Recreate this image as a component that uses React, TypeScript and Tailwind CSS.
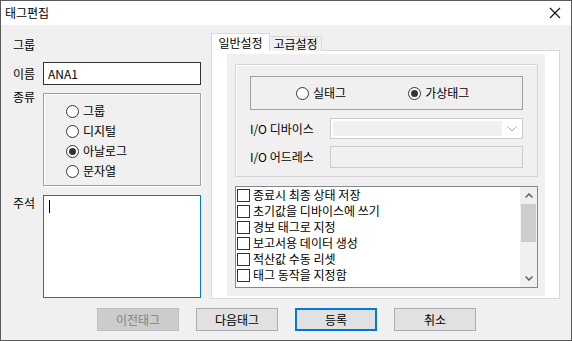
import React from 'react';

const font = { fontFamily: '"Noto Sans CJK KR", "Noto Sans", sans-serif' };

const Radio = ({ checked, label }: { checked?: boolean; label: string }) => (
  <div className="flex items-center gap-[4px] h-[20px]">
    <span className="w-[13px] h-[13px] rounded-full border border-[#333333] bg-white flex items-center justify-center">
      {checked && <span className="w-[7px] h-[7px] rounded-full bg-[#333333]" />}
    </span>
    <span>{label}</span>
  </div>
);

const options = [
  '종료시 최종 상태 저장',
  '초기값을 디바이스에 쓰기',
  '경보 태그로 지정',
  '보고서용 데이터 생성',
  '적산값 수동 리셋',
  '태그 동작을 지정함',
];

const Button = ({ label, disabled, primary }: { label: string; disabled?: boolean; primary?: boolean }) => (
  <div
    className={
      disabled
        ? 'w-[82px] h-[23px] flex items-center justify-center border border-[#bfbfbf] bg-[#cccccc] text-[#838383]'
        : primary
        ? 'w-[82px] h-[23px] flex items-center justify-center border-2 border-[#0078d7] bg-[#e1e1e1] text-black'
        : 'w-[82px] h-[23px] flex items-center justify-center border border-[#adadad] bg-[#e1e1e1] text-black'
    }
  >
    {label}
  </div>
);

export default function App() {
  return (
    <div
      className="w-[572px] h-[341px] border border-[#5a5a5a] bg-[#f0f0f0] flex flex-col text-[12px] leading-[16px] text-black"
      style={font}
    >
      {/* title bar */}
      <div className="h-[24px] bg-white flex items-center justify-between pl-[4px] pr-[10px]">
        <span className="text-[12px]">태그편집</span>
        <svg width="12" height="12" viewBox="0 0 12 12">
          <path d="M1 1 L11 11 M11 1 L1 11" stroke="#111" strokeWidth="1.1" />
        </svg>
      </div>

      <div className="flex">
        {/* left column */}
        <div className="ml-[12px] w-[189px] flex flex-col">
          <div className="mt-[12px] h-[16px]">그룹</div>
          <div className="mt-[9px] flex items-center">
            <span className="w-[30px]">이름</span>
            <div className="w-[158px] h-[23px] border border-[#333333] bg-white flex items-center pl-[4px]">ANA1</div>
          </div>
          <div className="mt-[8px] flex">
            <span className="w-[30px] -mt-[4px]">종류</span>
            <div className="w-[158px] h-[93px] border border-[#a0a0a0] shadow-[inset_1px_1px_0_#ffffff,1px_1px_0_#ffffff] pl-[22px] pt-[7px] flex flex-col">
              <Radio label="그룹" />
              <Radio label="디지털" />
              <Radio checked label="아날로그" />
              <Radio label="문자열" />
            </div>
          </div>
          <div className="mt-[9px] flex">
            <span className="w-[30px]">주석</span>
            <div className="w-[158px] h-[103px] border border-[#0078d7] bg-white pl-[5px] pt-[4px]">
              <div className="w-[1px] h-[13px] bg-black" />
            </div>
          </div>
        </div>

        {/* tab control */}
        <div className="ml-[9px] w-[349px] flex flex-col mt-[8px]">
          <div className="flex items-end h-[18px] relative z-10">
            <div className="w-[59px] h-[18px] bg-white border border-b-0 border-[#d9d9d9] flex items-center justify-center">
              일반설정
            </div>
            <div className="w-[52px] h-[15px] bg-[#f0f0f0] border border-l-0 border-b-0 border-[#d9d9d9] flex items-center justify-center">
              고급설정
            </div>
          </div>
          <div className="h-[249px] -mt-[1px] bg-white border border-[#d9d9d9] pl-[15px] pt-[3px] pr-[14px] pb-[2px]">
            <div className="h-full bg-[#f0f0f0] pl-[8px] pt-[10px] pr-[7px]">
              <div className="w-[303px] h-[113px] border border-[#d5d5d5] shadow-[inset_1px_1px_0_#ffffff] pl-[14px] pt-[11px]">
                <div className="w-[273px] h-[34px] border border-[#a0a0a0] flex items-center">
                  <div className="ml-[45px]">
                    <Radio label="실태그" />
                  </div>
                  <div className="ml-[62px]">
                    <Radio checked label="가상태그" />
                  </div>
                </div>
                <div className="mt-[8px] flex items-center">
                  <span className="w-[80px]">I/O 디바이스</span>
                  <div className="w-[193px] h-[21px] border border-[#cccccc] bg-white flex items-center p-[2px]">
                    <div className="w-[169px] h-full bg-[#f0f0f0]" />
                    <svg className="ml-[5px]" width="10" height="6" viewBox="0 0 10 6">
                      <path d="M0.5 0.5 L5 5 L9.5 0.5" stroke="#a0a0a0" fill="none" strokeWidth="1" />
                    </svg>
                  </div>
                </div>
                <div className="mt-[7px] flex items-center">
                  <span className="w-[80px]">I/O 어드레스</span>
                  <div className="w-[193px] h-[22px] border border-[#cccccc] bg-[#f0f0f0]" />
                </div>
              </div>
              <div className="mt-[9px] w-[303px] h-[102px] border border-[#828790] bg-white flex">
                <div className="flex-1 flex flex-col pl-[1px]">
                  {options.map((o) => (
                    <div key={o} className="h-[16px] flex items-center gap-[3px]">
                      <span className="w-[13px] h-[13px] border border-[#333333] bg-white" />
                      <span>{o}</span>
                    </div>
                  ))}
                </div>
                <div className="w-[17px] h-full bg-[#f0f0f0] flex flex-col items-center">
                  <div className="h-[17px] flex items-center justify-center">
                    <svg width="8" height="5" viewBox="0 0 8 5">
                      <path d="M0.5 4.5 L4 1 L7.5 4.5" stroke="#606060" fill="none" strokeWidth="1.5" />
                    </svg>
                  </div>
                  <div className="w-[15px] h-[38px] bg-[#cdcdcd]" />
                  <div className="flex-1" />
                  <div className="h-[17px] flex items-center justify-center">
                    <svg width="8" height="5" viewBox="0 0 8 5">
                      <path d="M0.5 0.5 L4 4 L7.5 0.5" stroke="#606060" fill="none" strokeWidth="1.5" />
                    </svg>
                  </div>
                </div>
              </div>
            </div>
          </div>
        </div>
      </div>

      {/* buttons */}
      <div className="mt-[9px] ml-[96px] flex gap-[17px]">
        <Button label="이전태그" disabled />
        <Button label="다음태그" />
        <Button label="등록" primary />
        <Button label="취소" />
      </div>
    </div>
  );
}
